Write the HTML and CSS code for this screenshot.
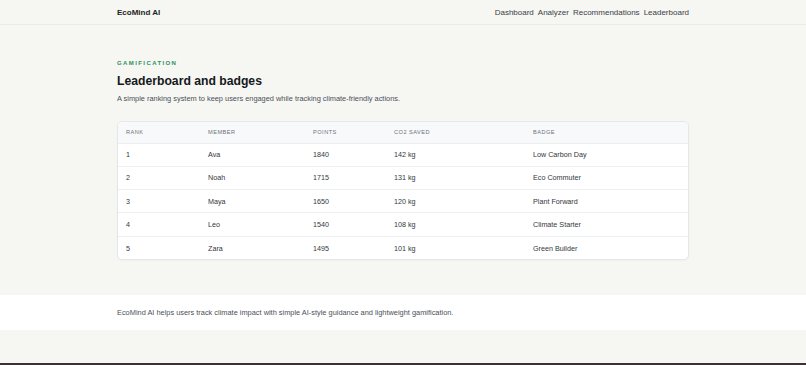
FILE: index.html
```html
<!DOCTYPE html>
<html lang="en">

<head>
    <meta charset="UTF-8" />
    <meta name="viewport" content="width=device-width, initial-scale=1.0" />
    <title>EcoMind AI - Leaderboard</title>
    <link rel="stylesheet" href="styles.css">
</head>

<body>
    <div class="page">
        <header class="topbar">
            <div class="container topbar-inner">
                <div class="brand">EcoMind AI</div>
                <nav class="nav-links">
                    <a href="#">Dashboard</a>
                    <a href="#">Analyzer</a>
                    <a href="#">Recommendations</a>
                    <a href="#">Leaderboard</a>
                </nav>
            </div>
        </header>

        <main class="container section">
            <p class="eyebrow">Gamification</p>
            <h1>Leaderboard and badges</h1>
            <p class="lead">A simple ranking system to keep users engaged while tracking climate-friendly actions.</p>

            <div class="table-card">
                <table class="board">
                    <thead>
                        <tr>
                            <th class="col-rank">Rank</th>
                            <th class="col-member">Member</th>
                            <th class="col-points">Points</th>
                            <th class="col-co2">CO2 Saved</th>
                            <th>Badge</th>
                        </tr>
                    </thead>
                    <tbody>
                        <tr><td>1</td><td>Ava</td><td>1840</td><td>142 kg</td><td>Low Carbon Day</td></tr>
                        <tr><td>2</td><td>Noah</td><td>1715</td><td>131 kg</td><td>Eco Commuter</td></tr>
                        <tr><td>3</td><td>Maya</td><td>1650</td><td>120 kg</td><td>Plant Forward</td></tr>
                        <tr><td>4</td><td>Leo</td><td>1540</td><td>108 kg</td><td>Climate Starter</td></tr>
                        <tr><td>5</td><td>Zara</td><td>1495</td><td>101 kg</td><td>Green Builder</td></tr>
                    </tbody>
                </table>
            </div>
        </main>

        <footer class="site-footer">
            <div class="container">
                EcoMind AI helps users track climate impact with simple AI-style guidance and lightweight gamification.
            </div>
        </footer>

        <div class="page-end"></div>
    </div>
</body>

</html>
```

FILE: styles.css
```css
* {
    margin: 0;
    padding: 0;
    box-sizing: border-box;
}

body,
html {
    height: 100%;
}

body {
    font-family: "Liberation Sans", Arial, sans-serif;
    background: #f6f6f2;
    color: #1f2328;
}

.page {
    min-height: 100vh;
    display: flex;
    flex-direction: column;
}

.container {
    width: 572px;
    margin: 0 auto;
}

.topbar {
    height: 25px;
    border-bottom: 1px solid #ecece7;
}

.topbar-inner {
    height: 100%;
    display: flex;
    justify-content: space-between;
    align-items: center;
}

.brand {
    font-size: 8px;
    font-weight: bold;
    color: #1c1f23;
}

.nav-links {
    display: flex;
    gap: 4px;
}

.nav-links a {
    font-size: 8px;
    color: #3b4149;
    text-decoration: none;
}

.section {
    padding-top: 35px;
}

.eyebrow {
    font-size: 6px;
    line-height: 7px;
    font-weight: bold;
    letter-spacing: 1.4px;
    text-transform: uppercase;
    color: #2f8f5b;
}

h1 {
    font-size: 12.2px;
    line-height: 14px;
    font-weight: bold;
    color: #15181c;
    margin-top: 7px;
}

.lead {
    font-size: 7.4px;
    line-height: 9px;
    color: #4b5058;
    margin-top: 6px;
}

.table-card {
    margin-top: 18px;
    background: #ffffff;
    border: 1px solid #e6e7ea;
    border-radius: 5px;
    overflow: hidden;
    box-shadow: 0 1px 2px rgba(0, 0, 0, 0.03);
}

.board {
    width: 100%;
    border-collapse: collapse;
    font-size: 7.2px;
    color: #33373d;
}

.board th {
    background: #f8f9fa;
    text-align: left;
    font-size: 5.6px;
    font-weight: normal;
    letter-spacing: 0.5px;
    text-transform: uppercase;
    color: #6b7280;
    height: 21px;
    padding: 0 8px;
    border-bottom: 1px solid #eceef1;
}

.board td {
    height: 23.3px;
    padding: 0 8px;
    border-bottom: 1px solid #eef0f2;
}

.board tbody tr:last-child td {
    border-bottom: none;
}

.col-rank {
    width: 82px;
}

.col-member {
    width: 105px;
}

.col-points {
    width: 81px;
}

.col-co2 {
    width: 139px;
}

.site-footer {
    margin-top: 35px;
    background: #ffffff;
    padding: 13px 0;
    font-size: 7.4px;
    line-height: 9px;
    color: #4b5058;
}

.page-end {
    margin-top: auto;
    height: 2px;
    background: #3a3234;
}
```
